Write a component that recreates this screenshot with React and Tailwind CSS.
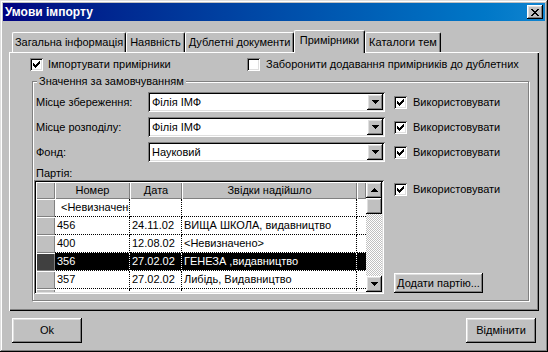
import React from "react";

const raised =
  "shadow-[inset_-1px_-1px_#000,inset_1px_1px_#fff,inset_-2px_-2px_#808080,inset_2px_2px_#dfdfdf]";
const sunken =
  "shadow-[inset_1px_1px_#808080,inset_-1px_-1px_#fff,inset_2px_2px_#000,inset_-2px_-2px_#dfdfdf]";
const cellRaised = "shadow-[inset_1px_1px_#fff,inset_-1px_-1px_#808080]";

const Tick = () => (
  <svg width="7" height="7" viewBox="0 0 7 7" shapeRendering="crispEdges">
    <path d="M0 2h1v3h-1zM1 3h1v3h-1zM2 4h1v3h-1zM3 3h1v3h-1zM4 2h1v3h-1zM5 1h1v3h-1zM6 0h1v3h-1z" />
  </svg>
);

const Down = () => (
  <svg width="7" height="4" viewBox="0 0 7 4" shapeRendering="crispEdges">
    <path d="M0 0h7v1h-1v1h-1v1h-1v1h-1v-1h-1v-1h-1v-1h-1z" />
  </svg>
);

const Up = () => (
  <svg width="7" height="4" viewBox="0 0 7 4" shapeRendering="crispEdges">
    <path d="M0 4h7v-1h-1v-1h-1v-1h-1v-1h-1v1h-1v1h-1v1h-1z" />
  </svg>
);

const CloseX = () => (
  <svg width="8" height="7" viewBox="0 0 8 7" shapeRendering="crispEdges">
    <path d="M0 0h2v1h-2zM6 0h2v1h-2zM1 1h2v1h-2zM5 1h2v1h-2zM2 2h4v1h-4zM3 3h2v1h-2zM2 4h4v1h-4zM1 5h2v1h-2zM5 5h2v1h-2zM0 6h2v1h-2zM6 6h2v1h-2z" />
  </svg>
);

const Check = ({ checked }) => (
  <div className={`w-[13px] h-[13px] shrink-0 bg-white flex items-center justify-center ${sunken}`}>
    {checked && <Tick />}
  </div>
);

const Combo = ({ value }) => (
  <div className={`w-[237px] h-[20px] shrink-0 bg-white p-[2px] flex ${sunken}`}>
    <div className="flex-1 pl-[2px] leading-[16px] whitespace-nowrap">{value}</div>
    <div className={`w-[16px] h-[16px] bg-[#c0c0c0] flex items-center justify-center ${raised}`}>
      <Down />
    </div>
  </div>
);

const Tab = ({ label, className, sel }) => (
  <div
    className={`${className} ${
      sel ? "h-[23px] -mb-[1px] relative z-10" : "h-[20px]"
    } shrink-0 bg-[#c0c0c0] border-t border-l border-white border-r border-r-black rounded-t-[2px] shadow-[inset_-1px_0_#808080] pt-[3px] text-center leading-[13px] whitespace-nowrap`}
  >
    {label}
  </div>
);

const Row = ({ n, d, s, sel, first }) => {
  const cell = sel
    ? "bg-black text-white border-white"
    : "bg-white border-black";
  const base = "shrink-0 border-r border-b border-dotted overflow-hidden whitespace-nowrap leading-[17px]";
  return (
    <div className="flex h-[18px] shrink-0">
      <div className={`w-[19px] shrink-0 ${sel ? "bg-[#404040]" : "bg-[#c0c0c0]"} ${cellRaised}`} />
      <div className={`w-[75px] ${base} ${cell} ${first ? "pl-[6px]" : "pl-[2px]"}`}>{n}</div>
      <div className={`w-[52px] pl-[2px] ${base} ${cell}`}>{d}</div>
      <div className={`w-[175px] pl-[2px] ${base} ${cell}`}>{s}</div>
      <div className={`w-[9px] shrink-0 border-b border-dotted ${cell}`} />
    </div>
  );
};

const Grid = () => (
  <div className={`w-[350px] h-[114px] p-[2px] bg-white flex ${sunken}`}>
    <div className="w-[330px] flex flex-col overflow-hidden">
      <div className="flex h-[17px] shrink-0 bg-[#c0c0c0] leading-[16px] text-center">
        <div className={`w-[19px] shrink-0 ${cellRaised}`} />
        <div className={`w-[75px] shrink-0 ${cellRaised}`}>Номер</div>
        <div className={`w-[52px] shrink-0 ${cellRaised}`}>Дата</div>
        <div className={`w-[175px] shrink-0 ${cellRaised}`}>Звідки надійшло</div>
        <div className={`w-[9px] shrink-0 ${cellRaised}`} />
      </div>
      <Row n="<Невизначено>" d="" s="" first />
      <Row n="456" d="24.11.02" s="ВИЩА ШКОЛА, видавництво" />
      <Row n="400" d="12.08.02" s="<Невизначено>" />
      <Row n="356" d="27.02.02" s="ГЕНЕЗА ,видавництво" sel />
      <Row n="357" d="27.02.02" s="Либідь, Видавництво" />
      <Row n="" d="" s="" />
    </div>
    <div className="w-[16px] flex flex-col">
      <div className={`h-[16px] shrink-0 bg-[#c0c0c0] flex items-center justify-center ${raised}`}>
        <Up />
      </div>
      <div className={`h-[16px] shrink-0 bg-[#c0c0c0] ${raised}`} />
      <div className="flex-1 bg-[image:repeating-conic-gradient(#fff_0_25%,#c0c0c0_0_50%)] bg-[length:2px_2px]" />
      <div className={`h-[16px] shrink-0 bg-[#c0c0c0] flex items-center justify-center ${raised}`}>
        <Down />
      </div>
    </div>
  </div>
);

const Use = () => (
  <div className="flex items-center gap-[6px] whitespace-nowrap">
    <Check checked />
    <span className="leading-[13px]">Використовувати</span>
  </div>
);

const FieldRow = ({ label, value }) => (
  <div className="flex items-center h-[20px]">
    <div className="w-[114px] shrink-0 pl-[2px] leading-[13px]">{label}</div>
    <Combo value={value} />
    <div className="ml-[9px]">
      <Use />
    </div>
  </div>
);

export default function App() {
  return (
    <div
      className={`w-[548px] h-[352px] bg-[#c0c0c0] p-[3px] flex flex-col font-['Liberation_Sans',Arial,sans-serif] text-[11px] text-black shadow-[inset_-1px_-1px_#000,inset_1px_1px_#dfdfdf,inset_-2px_-2px_#808080,inset_2px_2px_#fff]`}
    >
      <div className="h-[18px] shrink-0 flex items-center justify-between pl-[2px] pr-[2px] bg-linear-to-r from-[#000080] to-[#1084d0]">
        <span className="text-white font-bold text-[12px] leading-[14px]">Умови імпорту</span>
        <div className={`w-[16px] h-[14px] bg-[#c0c0c0] flex items-center justify-center ${raised}`}>
          <CloseX />
        </div>
      </div>

      <div className="px-[6px] flex flex-col">
        <div className="mt-[9px] h-[22px] pl-[3px] flex items-end">
          <Tab label="Загальна інформація" className="w-[114px]" />
          <Tab label="Наявність" className="w-[59px]" />
          <Tab label="Дублетні документи" className="w-[109px]" />
          <Tab label="Примірники" className="w-[71px]" sel />
          <Tab label="Каталоги тем" className="w-[76px]" />
        </div>

        <div className="h-[259px] bg-[#c0c0c0] pt-[6px] flex flex-col shadow-[inset_1px_1px_#fff,inset_-1px_-1px_#000,inset_-2px_-2px_#808080]">
          <div className="flex items-center h-[13px] pl-[21px]">
            <div className="w-[217px] flex items-center gap-[5px]">
              <Check checked />
              <span className="leading-[13px]">Імпортувати примірники</span>
            </div>
            <div className="flex items-center gap-[6px]">
              <Check />
              <span className="leading-[13px]">Заборонити додавання примірників до дублетних</span>
            </div>
          </div>

          <fieldset className="ml-[23px] mt-[4px] w-[497px] border border-[#808080] shadow-[1px_1px_#fff,inset_1px_1px_#fff] pl-[1px] pt-[4px] pb-[6px]">
            <legend className="ml-[3px] px-[2px] bg-[#c0c0c0] leading-[13px]">
              Значення за замовчуванням
            </legend>
            <div className="flex flex-col gap-[5px]">
              <FieldRow label="Місце збереження:" value="Філія ІМФ" />
              <FieldRow label="Місце розподілу:" value="Філія ІМФ" />
              <FieldRow label="Фонд:" value="Науковий" />
              <div className="flex">
                <div className="w-[351px] shrink-0">
                  <div className="pl-[2px] leading-[13px]">Партія:</div>
                  <Grid />
                </div>
                <div className="ml-[9px] flex flex-col">
                  <div className="mt-[16px]">
                    <Use />
                  </div>
                  <button
                    className={`mt-auto mb-[1px] w-[89px] h-[20px] bg-[#c0c0c0] leading-[13px] ${raised}`}
                  >
                    Додати партію...
                  </button>
                </div>
              </div>
            </div>
          </fieldset>
        </div>

        <div className="mt-[7px] px-[3px] flex justify-between">
          <button className={`w-[70px] h-[25px] bg-[#c0c0c0] ${raised}`}>Ok</button>
          <button className={`w-[70px] h-[25px] bg-[#c0c0c0] ${raised}`}>Відмінити</button>
        </div>
      </div>
    </div>
  );
}
